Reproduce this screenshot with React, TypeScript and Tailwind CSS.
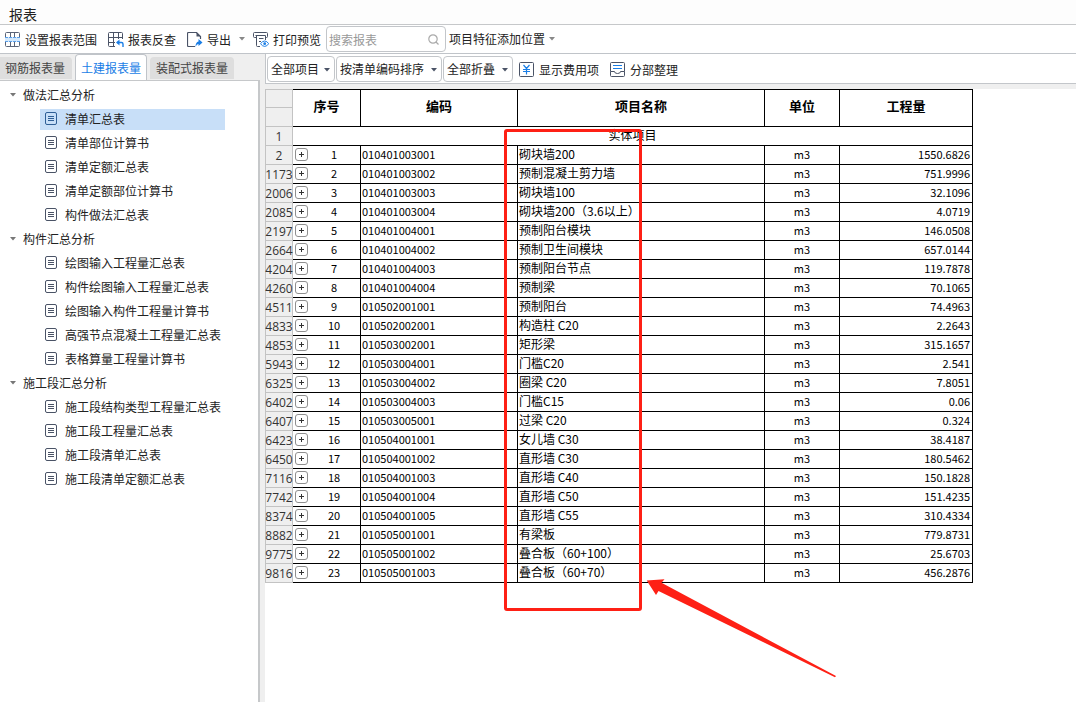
import type { ReactNode } from "react";

const tree = [
  {
    title: "做法汇总分析",
    items: ["清单汇总表", "清单部位计算书", "清单定额汇总表", "清单定额部位计算书", "构件做法汇总表"],
  },
  {
    title: "构件汇总分析",
    items: [
      "绘图输入工程量汇总表",
      "构件绘图输入工程量汇总表",
      "绘图输入构件工程量计算书",
      "高强节点混凝土工程量汇总表",
      "表格算量工程量计算书",
    ],
  },
  {
    title: "施工段汇总分析",
    items: ["施工段结构类型工程量汇总表", "施工段工程量汇总表", "施工段清单汇总表", "施工段清单定额汇总表"],
  },
];

const rows = [
  { line: "2", code: "010401003001", name: "砌块墙200", qty: "1550.6826" },
  { line: "1173", code: "010401003002", name: "预制混凝土剪力墙", qty: "751.9996" },
  { line: "2006", code: "010401003003", name: "砌块墙100", qty: "32.1096" },
  { line: "2085", code: "010401003004", name: "砌块墙200（3.6以上）", qty: "4.0719" },
  { line: "2197", code: "010401004001", name: "预制阳台模块", qty: "146.0508" },
  { line: "2664", code: "010401004002", name: "预制卫生间模块", qty: "657.0144" },
  { line: "4204", code: "010401004003", name: "预制阳台节点", qty: "119.7878" },
  { line: "4260", code: "010401004004", name: "预制梁", qty: "70.1065" },
  { line: "4511", code: "010502001001", name: "预制阳台", qty: "74.4963" },
  { line: "4833", code: "010502002001", name: "构造柱 C20", qty: "2.2643" },
  { line: "4853", code: "010503002001", name: "矩形梁", qty: "315.1657" },
  { line: "5943", code: "010503004001", name: "门槛C20", qty: "2.541" },
  { line: "6325", code: "010503004002", name: "圈梁 C20", qty: "7.8051" },
  { line: "6402", code: "010503004003", name: "门槛C15", qty: "0.06" },
  { line: "6407", code: "010503005001", name: "过梁 C20", qty: "0.324" },
  { line: "6423", code: "010504001001", name: "女儿墙 C30", qty: "38.4187" },
  { line: "6450", code: "010504001002", name: "直形墙 C30", qty: "180.5462" },
  { line: "7116", code: "010504001003", name: "直形墙 C40", qty: "150.1828" },
  { line: "7742", code: "010504001004", name: "直形墙 C50", qty: "151.4235" },
  { line: "8374", code: "010504001005", name: "直形墙 C55", qty: "310.4334" },
  { line: "8882", code: "010505001001", name: "有梁板", qty: "779.8731" },
  { line: "9775", code: "010505001002", name: "叠合板（60+100）", qty: "25.6703" },
  { line: "9816", code: "010505001003", name: "叠合板（60+70）", qty: "456.2876" },
];

function Caret({ className = "" }: { className?: string }) {
  return (
    <svg className={className} width="6" height="4" viewBox="0 0 6 4" aria-hidden="true">
      <path d="M0 0h6L3 3.5z" fill="currentColor" />
    </svg>
  );
}

function RangeIcon() {
  return (
    <svg width="16" height="16" viewBox="0 0 16 16" fill="none" stroke="#5a6478" aria-hidden="true">
      <rect x="0" y="5" width="15" height="5" fill="#d3e8fc" stroke="none" />
      <path d="M.5 5V1.500a1 1 0 0 1 1-1h12a1 1 0 0 1 1 1V5M.5 10v3.500a1 1 0 0 0 1 1h12a1 1 0 0 0 1-1V10M5.500.5V5M9.500.5V5M5.500 10v4.500M9.500 10v4.500" />
      <path d="M0 5.500h15M0 9.500h15" stroke="#5b9fe8" strokeDasharray="3 1" />
    </svg>
  );
}

function LookupIcon() {
  return (
    <svg width="16" height="16" viewBox="0 0 16 16" fill="none" stroke="#4a5366" aria-hidden="true">
      <path d="M14.500 7V1.500a1 1 0 0 0-1-1h-12a1 1 0 0 0-1 1v12a1 1 0 0 0 1 1H7M.5 5.500h14M.5 10.500H7M5.500.5v14M10.500.5V7" />
      <path d="M9 10.500h4.500q1.500 0 1.500 1.500v3" stroke="#1a7ee6" strokeWidth="1.400" />
      <path d="M11.500 7.500v6L8 10.500z" fill="#1a7ee6" stroke="none" />
    </svg>
  );
}

function ExportIcon() {
  return (
    <svg width="16" height="16" viewBox="0 0 16 16" fill="none" stroke="#4a5366" aria-hidden="true">
      <path d="M8 14.500H1.500a1 1 0 0 1-1-1v-12a1 1 0 0 1 1-1h8l4 4V7" strokeWidth="1.200" />
      <path d="M9.500.5v4h4z" fill="#4a5366" stroke="none" />
      <path d="M8.500 15q0-5 3-5.500V7l4 3.500-4 3.500v-2Q9.500 12 8.500 15z" fill="#1a7ee6" stroke="none" />
    </svg>
  );
}

function PreviewIcon() {
  return (
    <svg width="16" height="16" viewBox="0 0 16 16" fill="none" stroke="#4a5366" aria-hidden="true">
      <path d="M3 5.500H1.500a1 1 0 0 1-1-1v-3a1 1 0 0 1 1-1h12a1 1 0 0 1 1 1v3a1 1 0 0 1-1 1H13M2.500 3.500h10M3.500 3.500v10a1 1 0 0 0 1 1H7M12.500 3.500V8M6 6.500h4.500M6 9.500h2" />
      <path d="M7.500 11.700q2-2.700 4.200-2.700t4 2.700q-1.800 2.700-4 2.700t-4.200-2.700z" stroke="#1a7ee6" fill="#fff" />
      <circle cx="11.700" cy="11.700" r="1.400" fill="#1a7ee6" stroke="none" />
    </svg>
  );
}

function FeeIcon() {
  return (
    <svg width="16" height="16" viewBox="0 0 16 16" fill="none" aria-hidden="true">
      <rect x=".5" y=".5" width="14" height="14" rx="1" stroke="#4a5366" />
      <path d="M4.500 3 7.500 6.500 10.500 3M4 7.500h7M4 9.500h7M7.500 6.500v6" stroke="#1a7ee6" strokeWidth="1.200" />
    </svg>
  );
}

function ArrangeIcon() {
  return (
    <svg width="16" height="16" viewBox="0 0 16 16" fill="none" aria-hidden="true">
      <path
        d="M.5 9.500v-8a1 1 0 0 1 1-1h12a1 1 0 0 1 1 1v8h-4q0 2-3 2t-3-2zv4a1 1 0 0 0 1 1h12a1 1 0 0 0 1-1v-4"
        stroke="#4a5366"
      />
      <path d="M3 3.500h9M3 6.500h9" stroke="#1a7ee6" />
    </svg>
  );
}

function ReportIcon() {
  return (
    <svg width="12" height="14" viewBox="0 0 12 14" fill="none" stroke="currentColor" aria-hidden="true">
      <rect x=".5" y=".5" width="11" height="12" rx="1.500" />
      <path d="M3 4.500h6M3 6.500h6M3 8.500h6" />
    </svg>
  );
}

function ToolButton({ icon, label }: { icon: ReactNode; label: string }) {
  return (
    <button type="button" className="flex shrink-0 items-center gap-1 pt-[2px]">
      {icon}
      {label}
    </button>
  );
}

function Picker({ label, value, width }: { label: string; value: string; width: string }) {
  return (
    <div className={`relative h-[26px] shrink-0 ${width}`}>
      <select
        aria-label={label}
        className="h-full w-full appearance-none rounded-sm border border-[#c3c6ca] bg-white pl-[3px] text-[#222]"
      >
        <option>{value}</option>
      </select>
      <Caret className="pointer-events-none absolute top-3 right-[5px] text-[#4a5366]" />
    </div>
  );
}

function Sidebar() {
  return (
    <aside className="flex w-[260px] shrink-0 flex-col">
      <div role="tablist" className="flex h-[26px] items-end gap-[3px] bg-[#efefef]">
        <button
          type="button"
          role="tab"
          className="mb-px h-[22px] w-[72px] rounded-tr-sm bg-[#dedede] pl-[5px] text-left text-[#444]"
        >
          钢筋报表量
        </button>
        <button
          type="button"
          role="tab"
          aria-selected="true"
          className="h-[26px] w-[72px] rounded-t-sm border border-b-0 border-[#c0c4c9] bg-white text-[#1a7ee6]"
        >
          土建报表量
        </button>
        <button type="button" role="tab" className="mb-px h-[22px] w-[84px] rounded-t-sm bg-[#dedede] text-[#444]">
          装配式报表量
        </button>
      </div>
      <nav className="flex-1 border-t border-r-2 border-[#c6c8ca] bg-white pt-[3px]">
        {tree.map((group, g) => (
          <div key={group.title}>
            <button type="button" className="flex h-6 items-center gap-[7px] pb-[2px] pl-[10px]">
              <Caret className="text-[#777]" />
              {group.title}
            </button>
            <ul>
              {group.items.map((item, i) => (
                <li key={item} className="flex h-6 items-center pr-[33px] pb-[2px] pl-10">
                  <a
                    href="#"
                    className={`flex h-[21px] flex-1 items-center gap-2 pl-[5px] ${
                      g === 0 && i === 0 ? "bg-[#c8dff8]" : ""
                    }`}
                  >
                    <span className={g === 0 && i === 0 ? "text-[#2f5f96]" : "text-[#4a5366]"}>
                      <ReportIcon />
                    </span>
                    {item}
                  </a>
                </li>
              ))}
            </ul>
          </div>
        ))}
      </nav>
    </aside>
  );
}

function LineNo({ children, first = false }: { children?: ReactNode; first?: boolean }) {
  return (
    <th
      className={`border-r border-b border-l border-[#c3c3c3] bg-[#efefef] p-0 text-center font-['Open_Sans'] text-xs leading-4 font-normal text-[#333] ${
        first ? "border-t" : ""
      }`}
    >
      <div className="flex justify-center pt-[2px]">{children}</div>
    </th>
  );
}

function ReportTable() {
  const head = "border-t border-r border-b border-black p-0 pb-1 text-[13px] font-bold";
  const cell = "border-r border-b border-black p-0 pb-[2px] leading-4";
  return (
    <table className="w-[708px] table-fixed border-separate border-spacing-0 bg-white text-black">
      <colgroup>
        <col className="w-7" />
        <col className="w-[68px]" />
        <col className="w-[157px]" />
        <col className="w-[247px]" />
        <col className="w-[75px]" />
        <col />
      </colgroup>
      <thead>
        <tr className="h-[19px]">
          <LineNo first />
          <th rowSpan={2} className={head}>序号</th>
          <th rowSpan={2} className={head}>编码</th>
          <th rowSpan={2} className={head}>项目名称</th>
          <th rowSpan={2} className={head}>单位</th>
          <th rowSpan={2} className={head}>工程量</th>
        </tr>
        <tr className="h-[19px]">
          <LineNo />
        </tr>
      </thead>
      <tbody>
        <tr className="h-[19px]">
          <LineNo>1</LineNo>
          <td colSpan={5} className={`${cell} text-center`}>实体项目</td>
        </tr>
        {rows.map((row, i) => (
          <tr key={row.line} className="h-[19px]">
            <LineNo>{row.line}</LineNo>
            <td className={cell}>
              <div className="flex items-center pl-[2px]">
                <button
                  type="button"
                  aria-label="展开"
                  className="flex h-[13px] w-[13px] items-center justify-center rounded-[3px] border border-[#8f8f8f]"
                >
                  <svg width="5" height="5" viewBox="0 0 5 5" stroke="#333" aria-hidden="true">
                    <path d="M0 2.500h5M2.500 0v5" />
                  </svg>
                </button>
                <span className="flex-1 text-center text-[11px]">{i + 1}</span>
              </div>
            </td>
            <td className={`${cell} pl-px text-[11px]`}>{row.code}</td>
            <td className={`${cell} pl-px`}>{row.name}</td>
            <td className={`${cell} text-center text-[11px]`}>m3</td>
            <td className={`${cell} pr-[2px] text-right text-[11px]`}>{row.qty}</td>
          </tr>
        ))}
      </tbody>
    </table>
  );
}

export default function App() {
  return (
    <div className="flex min-h-screen flex-col bg-white font-['Noto_Sans_CJK_SC',sans-serif] text-xs text-[#222]">
      <header className="flex h-[25px] items-center border-b border-[#c6c8ca] bg-[#fdfdfd] pt-1 pl-[9px]">
        <h1 className="text-sm">报表</h1>
      </header>

      <div className="flex h-[29px] items-center border-b border-[#c0c4c9] pl-[5px]">
        <div className="flex items-center gap-[11px]">
          <ToolButton icon={<RangeIcon />} label="设置报表范围" />
          <ToolButton icon={<LookupIcon />} label="报表反查" />
          <ToolButton icon={<ExportIcon />} label="导出" />
        </div>
        <Caret className="ml-2 text-[#888]" />
        <div className="ml-2 flex items-center gap-[5px]">
          <ToolButton icon={<PreviewIcon />} label="打印预览" />
          <div className="relative h-[26px] w-[120px]">
            <input
              aria-label="搜索报表"
              placeholder="搜索报表"
              className="h-full w-full rounded-sm border border-[#c3c6ca] pl-[2px] placeholder:text-[#999]"
            />
            <svg
              className="absolute top-2 right-[7px]"
              width="11"
              height="11"
              viewBox="0 0 11 11"
              fill="none"
              stroke="#aaa"
              strokeWidth="1.200"
              aria-hidden="true"
            >
              <circle cx="5" cy="5" r="4.200" />
              <path d="m8 8 2.500 2.500" />
            </svg>
          </div>
        </div>
        <button type="button" className="ml-[3px] flex shrink-0 items-center gap-1">
          项目特征添加位置
          <Caret className="text-[#888]" />
        </button>
      </div>

      <div className="flex flex-1">
        <Sidebar />
        <div className="w-[5px] shrink-0 bg-[#efefef]" />
        <main className="min-w-0 flex-1">
          <div className="flex h-[30px] items-center border-b border-l border-[#c3c6ca] pl-px">
            <div className="flex gap-px">
              <Picker label="项目范围" value="全部项目" width="w-[68px]" />
              <Picker label="排序方式" value="按清单编码排序" width="w-[106px]" />
              <Picker label="折叠方式" value="全部折叠" width="w-[70px]" />
            </div>
            <div className="ml-[6px] flex gap-[11px]">
              <ToolButton icon={<FeeIcon />} label="显示费用项" />
              <ToolButton icon={<ArrangeIcon />} label="分部整理" />
            </div>
          </div>
          <div className="h-[5px] bg-[#efefef]" />
          <div className="relative">
            <ReportTable />
            {/* highlight around the name column and its pointer */}
            <div className="pointer-events-none absolute top-10 left-[239px] h-[482px] w-[138px] rounded-[3px] border-3 border-[#fe2015]" />
            <svg
              className="pointer-events-none absolute top-[490px] left-[381px]"
              width="192"
              height="100"
              viewBox="0 0 192 100"
              fill="#fe2015"
              aria-hidden="true"
            >
              <path d="M.7 1.500 18.500.3 15.500 3.800 190 97 189 98.200 12.500 12 10 16z" />
            </svg>
          </div>
        </main>
      </div>
    </div>
  );
}
